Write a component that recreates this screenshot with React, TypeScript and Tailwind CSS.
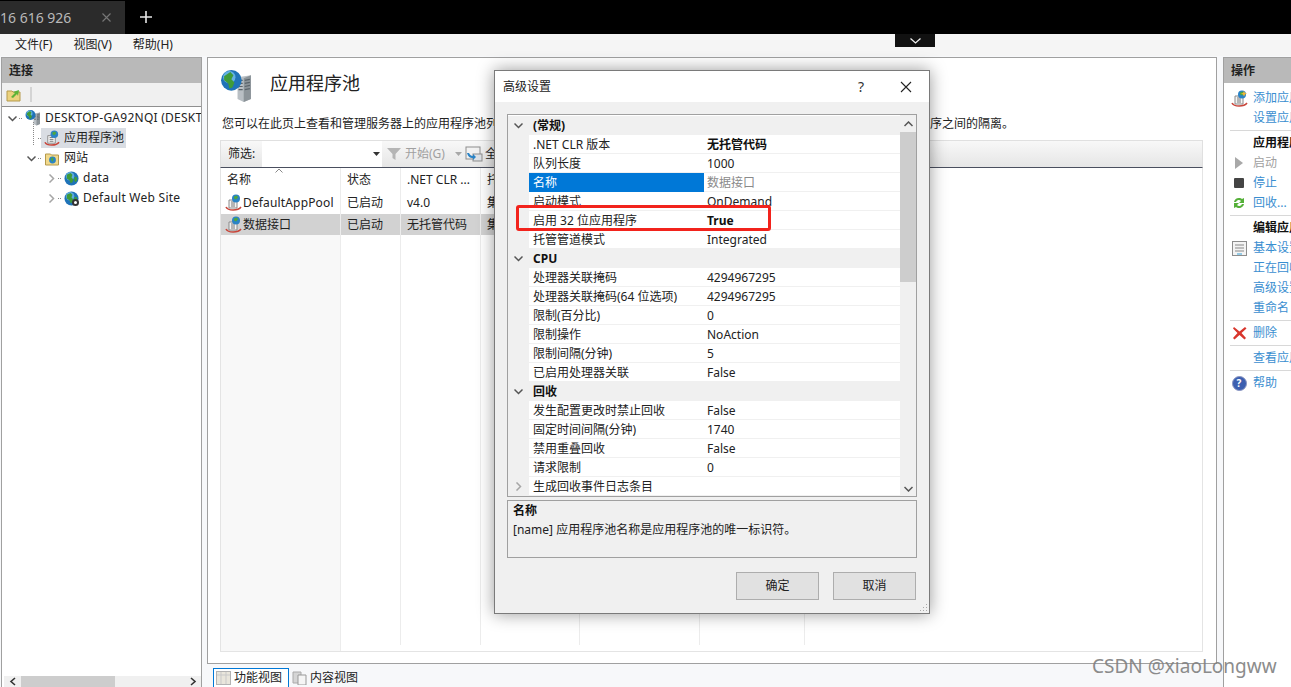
import React from "react";

const font = { fontFamily: '"Noto Sans", "Noto Sans CJK SC", sans-serif' };

function Globe({ s = 16 }: { s?: number }) {
  return (
    <svg width={s} height={s} viewBox="0 0 16 16" className="shrink-0">
      <circle cx="8" cy="8" r="7.5" fill="#1f73b8" />
      <circle cx="6.5" cy="5.5" r="4.5" fill="#6cb8e8" opacity="0.8" />
      <path d="M3 4l4-2 2 2-1 3 2 2-1 3-2 1-1-3-3-2z" fill="#3f9b3a" />
      <path d="M11 6l3 1 0 3-2 2-1-2z" fill="#3f9b3a" />
    </svg>
  );
}

function Pool({ star = false, s = 17 }: { star?: boolean; s?: number }) {
  return (
    <svg width={s} height={s} viewBox="0 0 17 17" className="shrink-0">
      <path d="M4 6h8v8H4z" fill="#f4f4f4" stroke="#8a8a8a" />
      <path d="M6 8h4M6 10h4M6 12h4" stroke="#777" />
      <path d="M1 13c2 4 12 4 15 0" fill="none" stroke="#c8453a" strokeWidth="1.6" />
      <circle cx="11" cy="4.5" r="4" fill="#2a83c6" />
      <path d="M9 2.500l3-1 1 2-2 2-2-1z" fill="#4ea63f" />
      {star && <path d="M13 1l1 2 2 .5-2 1-1 2-1-2-2-1 2-.5z" fill="#f2b632" />}
    </svg>
  );
}

function Server({ s = 16 }: { s?: number }) {
  return (
    <svg width={s} height={s} viewBox="0 0 32 32" className="shrink-0">
      <path d="M17 7l13-2v23l-7 3-6-3z" fill="#b9bfc4" />
      <path d="M23 8l7-3v23l-7 3z" fill="#8c9499" />
      <path d="M18 10h4M18 13h4M18 16h4M18 19h4M24 10l5-1M24 13l5-1M24 16l5-1M24 19l5-1" stroke="#59636a" strokeWidth="1.2" />
      <circle cx="11" cy="10" r="10" fill="#1f73b8" />
      <circle cx="9" cy="7" r="6" fill="#74c0ee" opacity="0.8" />
      <path d="M4 6l6-4 3 3-2 4 3 3-2 5-3 1-1-5-4-3z" fill="#3f9b3a" />
    </svg>
  );
}

function Chevron({ open, cls = "" }: { open: boolean; cls?: string }) {
  return (
    <svg width="9" height="9" viewBox="0 0 9 9" className={`shrink-0 ${cls}`}>
      <path
        d={open ? "M0.5 2.5L4.5 6.5L8.5 2.5" : "M2.5 0.5L6.5 4.5L2.5 8.5"}
        fill="none"
        stroke={open ? "#555" : "#a6a6a6"}
        strokeWidth="1.5"
      />
    </svg>
  );
}

function TopBars() {
  return (
    <>
      <div className="h-[34px] bg-black flex items-center shrink-0">
        <div className="w-[125px] h-[33px] mt-px bg-[#2b2b2b] flex items-center text-[#b9b9b9] text-[14px] overflow-hidden">
          <span className="whitespace-nowrap">16 616 926</span>
          <svg width="9" height="9" viewBox="0 0 9 9" className="ml-[31px]">
            <path d="M0.5 0.5l8 8M8.500 0.5l-8 8" stroke="#777" strokeWidth="1.1" />
          </svg>
        </div>
        <svg width="12" height="12" viewBox="0 0 12 12" className="ml-[15px]">
          <path d="M6 0v12M0 6h12" stroke="#e6e6e6" strokeWidth="1.6" />
        </svg>
      </div>
      <div className="h-[22px] bg-[#f5f5f5] flex items-center text-[12px] text-[#222] pl-[15px] gap-[21px] shrink-0 relative">
        <span>文件(F)</span>
        <span>视图(V)</span>
        <span>帮助(H)</span>
        <div className="absolute left-[895px] top-0 w-[40px] h-[13px] bg-[#111] flex items-center justify-center">
          <svg width="11" height="6" viewBox="0 0 11 6">
            <path d="M0.5 0.5L5.5 5L10.5 0.5" fill="none" stroke="#eee" strokeWidth="1.3" />
          </svg>
        </div>
      </div>
    </>
  );
}

function TreeRow({ indent, chevron, icon, label, sel, latin }: { indent: number; chevron?: "open" | "closed"; icon: React.ReactNode; label: string; sel?: boolean; latin?: boolean }) {
  return (
    <div className="h-[20px] flex items-center whitespace-nowrap" style={{ paddingLeft: indent }}>
      <span className="w-[11px] shrink-0 flex items-center">
        {chevron && <Chevron open={chevron === "open"} />}
      </span>
      <span className="w-[3px] shrink-0 border-t border-dotted border-[#888]" />
      <span className={`flex items-center h-[20px] pl-[3px] pr-[2px] ${sel ? "bg-[#d9dde3]" : ""}`}>
        {icon}
        <span className={`ml-[4px] ${latin ? "tracking-[0.25px]" : ""}`}>{label}</span>
      </span>
    </div>
  );
}

function LeftPanel() {
  return (
    <div className="w-[201px] ml-px border border-[#a0a0a0] border-b-0 flex flex-col bg-white shrink-0">
      <div className="h-[25px] bg-[#b9b9b9] flex items-center pl-[7px] text-[12px] font-bold text-[#222] shrink-0">连接</div>
      <div className="h-[24px] bg-[#f0f0f0] border-b border-[#8f8f8f] flex items-center pl-[4px] gap-[9px] shrink-0">
        <svg width="15" height="15" viewBox="0 0 15 15">
          <path d="M1 4h5l1 1h7v9H1z" fill="#ecd27e" stroke="#b59a4c" />
          <path d="M5 10l4-4-2-1 6-2-1 6-1-2-4 4z" fill="#5cb338" />
        </svg>
        <span className="w-[2px] h-[15px] bg-[#d4d4d4]" />
      </div>
      <div className="flex-1 pt-[1px] text-[12px] text-[#222] overflow-hidden relative">
        <TreeRow latin indent={6} chevron="open" icon={<Server s={16} />} label="DESKTOP-GA92NQI (DESKTOP-GA92NQI\Admin)" />
        <TreeRow indent={25} icon={<Pool s={16} />} label="应用程序池" sel />
        <TreeRow indent={25} chevron="open" icon={<svg width="16" height="15" viewBox="0 0 15 15" className="shrink-0"><path d="M1 3h5l1 1h7v10H1z" fill="#f1d98c" stroke="#b59a4c" /><circle cx="8" cy="9" r="3.4" fill="#2a83c6" /><path d="M6 8l2-2 1 2-1 3z" fill="#4ea63f" /></svg>} label="网站" />
        <TreeRow latin indent={45} chevron="closed" icon={<Globe s={15} />} label="data" />
        <TreeRow latin indent={45} chevron="closed" icon={<span className="relative shrink-0 w-[15px] h-[15px] block"><Globe s={15} /><span className="absolute right-0 bottom-0 w-[7px] h-[7px] rounded-full bg-white border-2 border-[#333]" /></span>} label="Default Web Site" />
        <div className="absolute left-[31px] top-[15px] h-[23px] border-l border-dotted border-[#888]" />
        <div className="absolute left-[2px] right-0 bottom-0 h-[11px] bg-[#f0f0f0] flex items-center justify-between">
          <svg width="8" height="9" viewBox="0 0 8 9" className="ml-[5px]"><path d="M6 1L2 4.5L6 8" fill="none" stroke="#333" strokeWidth="1.6" /></svg>
          <div className="absolute left-[17px] w-[94px] h-full bg-[#cdcdcd]" />
          <svg width="8" height="9" viewBox="0 0 8 9" className="mr-[4px]"><path d="M2 1L6 4.5L2 8" fill="none" stroke="#333" strokeWidth="1.6" /></svg>
        </div>
      </div>
    </div>
  );
}

const colW = ["w-[120px]", "w-[60px]", "w-[80px]", "w-[99px]", "w-[120px]", "w-[105px]"];

function TableRow({ cells, cls = "" }: { cells: React.ReactNode[]; cls?: string }) {
  return (
    <div className="flex shrink-0">
      {colW.map((w, i) => (
        <div key={i} className={`${w} ${cls} shrink-0 flex items-center pl-[6px] whitespace-nowrap overflow-hidden border-r border-[#ececec]`}>
          {cells[i]}
        </div>
      ))}
    </div>
  );
}

function CenterPanel() {
  return (
    <div className="w-[1010px] ml-[5px] border border-[#a0a0a0] bg-white flex flex-col pl-[12px] pr-[13px] pt-[12px] pb-[11px] shrink-0 mb-[23px] text-[12px] text-[#222]">
      <div className="flex items-center h-[33px] shrink-0">
        <Server s={33} />
        <span className="ml-[17px] text-[18px] text-[#222] pb-[7px]">应用程序池</span>
      </div>
      <div className="mt-[12px] pl-[2px] h-[18px] leading-[18px] whitespace-nowrap shrink-0">
        您可以在此页上查看和管理服务器上的应用程序池列表。应用程序池与工作进程相关联，包含一个或多个应用程序，并提供不同应用程序之间的隔离。
      </div>
      <div className="mt-[7px] h-[28px] shrink-0 bg-gradient-to-b from-[#f8f8f8] to-[#e6e6e6] border-b border-[#4a4f5f] border-t border-t-[#e0e0e0] border-x border-x-[#e0e0e0] flex items-center">
        <span className="pl-[7px] w-[41px] shrink-0">筛选:</span>
        <div className="w-[120px] h-full bg-white flex items-center justify-end pr-[2px] shrink-0">
          <svg width="7" height="4" viewBox="0 0 7 4"><path d="M0 0h7L3.5 4z" fill="#333" /></svg>
        </div>
        <svg width="14" height="14" viewBox="0 0 14 14" className="ml-[5px] shrink-0"><path d="M0 1h14L8.5 7v6l-3-2V7z" fill="#b5b5b5" /></svg>
        <span className="ml-[4px] text-[#a0a0a0] shrink-0">开始(G)</span>
        <svg width="7" height="4" viewBox="0 0 7 4" className="ml-[10px] shrink-0"><path d="M0 0h7L3.5 4z" fill="#a8a8a8" /></svg>
        <svg width="18" height="17" viewBox="0 0 18 17" className="ml-[3px] shrink-0">
          <rect x="1" y="1" width="14" height="12" fill="#f2f2f2" stroke="#8d8d8d" />
          <rect x="8" y="8" width="9" height="7" fill="#dfe3e8" stroke="#8d8d8d" />
          <path d="M2 7c1 4 3 5 6 5v2l3-3-3-3v2c-2 0-3-1-4-3z" fill="#2a83c6" />
        </svg>
        <span className="ml-[2px] shrink-0">全部</span>
      </div>
      <div className="flex-1 flex flex-col border-b border-x border-[#e4e4e4] min-h-0 overflow-hidden">
        <TableRow
          cls="h-[23px]"
          cells={[
            <span className="relative block w-full">
              名称
              <svg width="8" height="5" viewBox="0 0 8 5" className="absolute left-[48px] -top-[3px]"><path d="M0.5 4.500L4 1L7.500 4.500" fill="none" stroke="#888" /></svg>
            </span>,
            <span>状态</span>, <span>.NET CLR ...</span>, <span>托管管道模式</span>, <span>标识</span>, <span>应用程序</span>,
          ]}
        />
        <TableRow
          cls="h-[23px]"
          cells={[<span className="flex items-center gap-[1px] -ml-[2px] tracking-[0.15px]"><Pool />DefaultAppPool</span>, <span>已启动</span>, <span>v4.0</span>, <span>集成</span>]}
        />
        <TableRow
          cls="h-[21px] bg-[#d2d2d2]"
          cells={[<span className="flex items-center gap-[1px] -ml-[2px]"><Pool />数据接口</span>, <span>已启动</span>, <span>无托管代码</span>, <span>集成</span>]}
        />
        <div className="flex-1 flex min-h-0">
          {colW.map((w, i) => (
            <div key={i} className={`${w} shrink-0 border-r border-[#ececec] ${i === 0 ? "bg-[#f8f8f8]" : "mb-[6px]"}`} />
          ))}
        </div>
      </div>
    </div>
  );
}

type A = { t: string; k?: "link" | "head" | "off"; icon?: React.ReactNode; sep?: boolean };
const actions: A[] = [
  { t: "添加应用程序池...", k: "link", icon: <Pool star /> },
  { t: "设置应用程序池默认设置...", k: "link", sep: true },
  { t: "应用程序池任务", k: "head" },
  { t: "启动", k: "off", icon: <svg width="10" height="14" viewBox="0 0 10 14"><path d="M1 1l8 6-8 6z" fill="#a8a8a8" /></svg> },
  { t: "停止", k: "link", icon: <span className="block w-[10px] h-[10px] bg-[#444] rounded-[1px]" /> },
  { t: "回收...", k: "link", sep: true, icon: <svg width="14" height="14" viewBox="0 0 14 14"><path d="M2 6a5 5 0 0 1 8-3l2-1v5H7l2-2a3 3 0 0 0-5 1z" fill="#55b039" /><path d="M12 8a5 5 0 0 1-8 3l-2 1V7h5L5 9a3 3 0 0 0 5-1z" fill="#55b039" /></svg> },
  { t: "编辑应用程序池", k: "head" },
  { t: "基本设置...", k: "link", icon: <svg width="15" height="15" viewBox="0 0 15 15"><rect x="0.5" y="0.5" width="14" height="14" fill="#f4f4f4" stroke="#8d8d8d" /><path d="M3 4h9M3 7h9M3 10h9" stroke="#888" /><path d="M5 13h5" stroke="#38a3d8" /></svg> },
  { t: "正在回收...", k: "link" },
  { t: "高级设置...", k: "link" },
  { t: "重命名", k: "link", sep: true },
  { t: "删除", k: "link", sep: true, icon: <svg width="15" height="14" viewBox="0 0 15 14"><path d="M2 1l5.5 4.5L13 1l1.500 1.500L9.500 7l4.500 5-1.500 1.500L7.500 9 2.500 13.500 1 12l4.500-5L1 2.500z" fill="#d8352c" /></svg> },
  { t: "查看应用程序...", k: "link", sep: true },
  { t: "帮助", k: "link", icon: <span className="w-[15px] h-[15px] rounded-full bg-[#3c5fb0] border border-[#8894c0] text-white text-[10px] font-bold flex items-center justify-center leading-none">?</span> },
];

function RightPanel() {
  return (
    <div className="flex-1 min-w-0 ml-[6px] border border-[#a0a0a0] border-r-0 border-b-0 bg-white flex flex-col overflow-hidden text-[12px]">
      <div className="h-[25px] bg-[#b9b9b9] flex items-center pl-[7px] font-bold text-[#222] shrink-0">操作</div>
      <div className="pt-[5px]">
        {actions.map((a) => (
          <div key={a.t}>
            <div className="h-[20px] flex items-center whitespace-nowrap">
              <span className="w-[29px] shrink-0 flex items-center justify-center pl-[1px]">{a.icon}</span>
              <span className={a.k === "head" ? "font-bold text-[#111]" : a.k === "off" ? "text-[#a0a0a0]" : "text-[#3a8ed0]"}>{a.t}</span>
            </div>
            {a.sep && <div className="h-[5px] flex items-center ml-[6px]"><div className="h-px w-full bg-[#d8d8d8]" /></div>}
          </div>
        ))}
      </div>
    </div>
  );
}

type P = { n?: string; v?: string; cat?: boolean; closed?: boolean; bold?: boolean; sel?: boolean };
const props: P[] = [
  { n: "(常规)", cat: true },
  { n: ".NET CLR 版本", v: "无托管代码", bold: true },
  { n: "队列长度", v: "1000" },
  { n: "名称", v: "数据接口", sel: true },
  { n: "启动模式", v: "OnDemand" },
  { n: "启用 32 位应用程序", v: "True", bold: true },
  { n: "托管管道模式", v: "Integrated" },
  { n: "CPU", cat: true },
  { n: "处理器关联掩码", v: "4294967295" },
  { n: "处理器关联掩码(64 位选项)", v: "4294967295" },
  { n: "限制(百分比)", v: "0" },
  { n: "限制操作", v: "NoAction" },
  { n: "限制间隔(分钟)", v: "5" },
  { n: "已启用处理器关联", v: "False" },
  { n: "回收", cat: true },
  { n: "发生配置更改时禁止回收", v: "False" },
  { n: "固定时间间隔(分钟)", v: "1740" },
  { n: "禁用重叠回收", v: "False" },
  { n: "请求限制", v: "0" },
  { n: "生成回收事件日志条目", closed: true },
];

function PropRow({ p }: { p: P }) {
  if (p.cat) {
    return (
      <div className="h-[19px] bg-[#f0f0f0] flex items-center font-bold text-[#111]">
        <span className="w-[21px] flex justify-center"><Chevron open /></span>
        <span className="pl-[4px]">{p.n}</span>
      </div>
    );
  }
  return (
    <div className="h-[19px] flex">
      <span className="w-[21px] shrink-0 bg-[#f0f0f0] flex items-center justify-center">
        {p.closed && <Chevron open={false} />}
      </span>
      <span className={`w-[175px] shrink-0 pl-[4px] pt-[2px] flex items-center whitespace-nowrap border-b ${p.sel ? "bg-[#0078d7] text-white border-[#0078d7]" : "border-[#f0f0f0]"}`}>{p.n}</span>
      <span className={`flex-1 pl-[3px] pt-[2px] flex items-center border-b border-[#f0f0f0] ${p.bold ? "font-bold text-[#111]" : ""} ${p.sel ? "text-[#8a8a8a]" : ""}`}>{p.v}</span>
    </div>
  );
}

function Dialog() {
  return (
    <div className="absolute left-[494px] top-[70px] w-[436px] h-[544px] bg-[#f0f0f0] border border-[#7a7a7a] shadow-[0_0_16px_rgba(0,0,0,0.4)] flex flex-col text-[12px] text-[#222]">
      <div className="h-[31px] bg-white flex items-center pl-[8px] shrink-0">
        <span>高级设置</span>
        <span className="ml-auto text-[14px] text-[#333] mr-[36px]">?</span>
        <svg width="12" height="12" viewBox="0 0 12 12" className="mr-[17px]"><path d="M1 1l10 10M11 1L1 11" stroke="#222" strokeWidth="1.1" /></svg>
      </div>
      <div className="flex-1 flex flex-col px-[12px] pt-[12px] pb-[14px] relative">
        <div className="h-[383px] border border-[#a0a0a0] bg-white flex shrink-0 overflow-hidden">
          <div className="flex-1 pt-[1px] overflow-hidden">
            {props.map((p) => <PropRow key={p.n} p={p} />)}
          </div>
          <div className="w-[16px] bg-[#f0f0f0] shrink-0 flex flex-col items-center">
            <div className="h-[17px] flex items-center justify-center">
              <svg width="9" height="6" viewBox="0 0 9 6"><path d="M0.5 5L4.500 1L8.500 5" fill="none" stroke="#555" strokeWidth="1.5" /></svg>
            </div>
            <div className="w-full h-[150px] bg-[#cdcdcd]" />
            <div className="mt-auto h-[15px] flex items-center justify-center">
              <svg width="9" height="6" viewBox="0 0 9 6"><path d="M0.5 1L4.500 5L8.500 1" fill="none" stroke="#555" strokeWidth="1.5" /></svg>
            </div>
          </div>
        </div>
        <div className="mt-[3px] h-[58px] border border-[#a0a0a0] px-[5px] shrink-0 leading-[20px]">
          <div className="font-bold text-[#111]">名称</div>
          <div className="-mt-px">[name] 应用程序池名称是应用程序池的唯一标识符。</div>
        </div>
        <div className="mt-[14px] flex justify-end gap-[14px] pr-[1px]">
          <div className="w-[83px] h-[28px] bg-[#e1e1e1] border border-[#adadad] flex items-center justify-center">确定</div>
          <div className="w-[83px] h-[28px] bg-[#e1e1e1] border border-[#adadad] flex items-center justify-center">取消</div>
        </div>
        <div className="absolute left-[21px] top-[103px] w-[255px] h-[26px] border-[3px] border-[#f2231c] rounded-[3px]" />
        <svg width="10" height="10" viewBox="0 0 10 10" className="absolute right-[1px] bottom-[1px]">
          <path d="M8 1h1v1H8zM8 4h1v1H8zM5 4h1v1H5zM8 7h1v1H8zM5 7h1v1H5zM2 7h1v1H2z" fill="#a8a8a8" />
        </svg>
      </div>
    </div>
  );
}

function Tabs() {
  return (
    <div className="absolute left-[213px] top-[668px] flex items-end text-[12px] text-[#222]">
      <div className="h-[19px] w-[76px] border border-b-0 border-[#0078d7] flex items-center pl-[2px] gap-[3px] bg-white">
        <svg width="15" height="14" viewBox="0 0 15 14"><rect x="0.500" y="0.500" width="14" height="13" fill="#e9e6dc" stroke="#b3b3b3" /><path d="M1 4h13M5 1v12M10 1v12" stroke="#c9c9c9" /></svg>
        功能视图
      </div>
      <div className="h-[19px] flex items-center pl-[3px] gap-[3px]">
        <svg width="15" height="15" viewBox="0 0 15 15"><path d="M1 2h8v11H1z" fill="#d5d5d5" stroke="#aaa" /><path d="M6 5h8v10H6z" fill="#f5f5f5" stroke="#999" /></svg>
        内容视图
      </div>
    </div>
  );
}

export default function App() {
  return (
    <div className="w-[1291px] h-[687px] relative overflow-hidden bg-[#f7f8fa] flex flex-col" style={font}>
      <TopBars />
      <div className="flex-1 flex pt-[1px] min-h-0">
        <LeftPanel />
        <CenterPanel />
        <RightPanel />
      </div>
      <Tabs />
      <Dialog />
      <div className="absolute left-[1092px] top-[653px] text-[19px] leading-[26px] text-[#808080] opacity-90 whitespace-nowrap">CSDN @xiaoLongww</div>
    </div>
  );
}
